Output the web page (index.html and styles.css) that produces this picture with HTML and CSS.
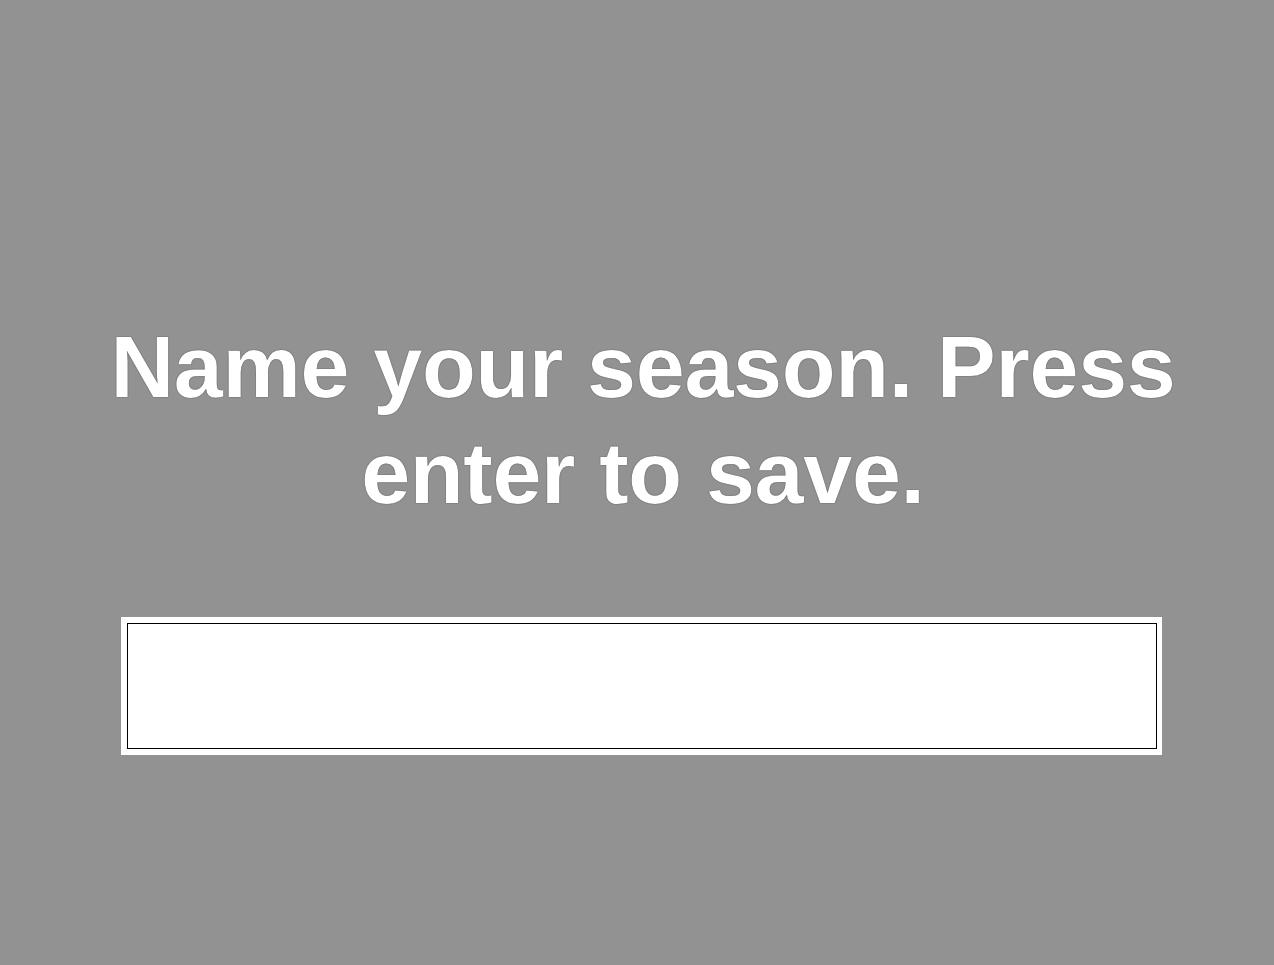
FILE: index.html
```html
<!DOCTYPE html>
<html>
<head>
<meta charset="utf-8">
<link rel="stylesheet" href="styles.css">
</head>
<body>
<main class="screen">
  <h1 class="prompt">Name your season. Press<br>enter to save.</h1>
  <div class="field">
    <input class="name-input" type="text">
  </div>
</main>
</body>
</html>
```
FILE: styles.css
```css
html, body {
  margin: 0;
  padding: 0;
  height: 100%;
  background: #929292;
}
.screen {
  box-sizing: border-box;
  height: 965px;
  padding: 314px 0 0 9px;
  display: flex;
  flex-direction: column;
  align-items: center;
}
.prompt {
  margin: 0;
  padding-left: 3px;
  font-family: "Liberation Sans", Arial, sans-serif;
  font-weight: 700;
  font-size: 88px;
  line-height: 106px;
  letter-spacing: -0.27px;
  color: #fff;
  text-align: center;
  text-shadow: 0 0 1px #000;
}
.field {
  margin-top: 91px;
  width: 1041px;
  height: 138px;
  box-sizing: border-box;
  padding: 6px 5px 6px 6px;
  background: #fff;
}
.name-input {
  display: block;
  box-sizing: border-box;
  width: 100%;
  height: 100%;
  margin: 0;
  border: 1px solid #000;
  background: #fff;
  outline: none;
  font-family: "Liberation Sans", Arial, sans-serif;
  font-size: 40px;
}
```
